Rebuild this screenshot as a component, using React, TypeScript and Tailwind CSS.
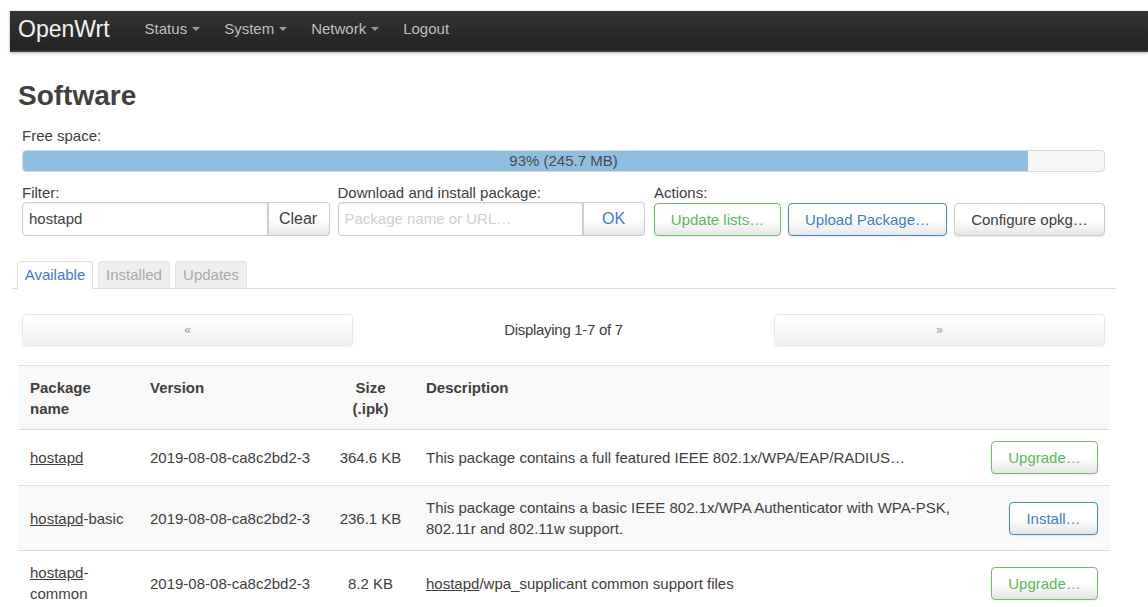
import React from "react";

const FONT = { fontFamily: '"Liberation Sans", Arial, Helvetica, sans-serif' };

const btnBase =
  "h-[33px] rounded-[4px] border bg-gradient-to-b from-white via-white to-[#e6e6e6] shadow-[inset_0_1px_0_rgba(255,255,255,0.2),0_1px_2px_rgba(0,0,0,0.08)] text-[15px] leading-none";

function Caret() {
  return (
    <span className="ml-[5px] inline-block h-0 w-0 border-x-[4px] border-t-[4px] border-x-transparent border-t-[#9a9a9a] align-middle" />
  );
}

function NavItem({ label, menu }: { label: string; menu?: boolean }) {
  return (
    <li className="flex items-center px-[12px] text-[15px] text-[#bfbfbf]">
      {label}
      {menu && <Caret />}
    </li>
  );
}

function Link({ children }: { children: React.ReactNode }) {
  return <span className="underline decoration-[#404040] underline-offset-[1px]">{children}</span>;
}

type Row = {
  name: React.ReactNode;
  version: string;
  size: string;
  desc: React.ReactNode;
  action: "upgrade" | "install";
  shaded?: boolean;
};

const rows: Row[] = [
  {
    name: <Link>hostapd</Link>,
    version: "2019-08-08-ca8c2bd2-3",
    size: "364.6 KB",
    desc: "This package contains a full featured IEEE 802.1x/WPA/EAP/RADIUS…",
    action: "upgrade",
  },
  {
    name: (
      <>
        <Link>hostapd</Link>-basic
      </>
    ),
    version: "2019-08-08-ca8c2bd2-3",
    size: "236.1 KB",
    desc: "This package contains a basic IEEE 802.1x/WPA Authenticator with WPA-PSK, 802.11r and 802.11w support.",
    action: "install",
    shaded: true,
  },
  {
    name: (
      <>
        <Link>hostapd</Link>-common
      </>
    ),
    version: "2019-08-08-ca8c2bd2-3",
    size: "8.2 KB",
    desc: (
      <>
        <Link>hostapd</Link>/wpa_supplicant common support files
      </>
    ),
    action: "upgrade",
  },
];

export default function App() {
  return (
    <div className="min-h-screen bg-white pl-[10px] pt-[11px] text-[#404040]" style={FONT}>
      {/* top navigation bar */}
      <nav className="flex h-[41px] items-center bg-gradient-to-b from-[#333333] to-[#222222] pb-[5px] shadow-[0_1px_3px_rgba(0,0,0,0.3),inset_0_-2px_0_rgba(255,255,255,0.12)]">
        <span className="pl-[8px] pr-[23px] text-[23px] leading-none text-[#f2f2f2]">OpenWrt</span>
        <ul className="flex">
          <NavItem label="Status" menu />
          <NavItem label="System" menu />
          <NavItem label="Network" menu />
          <NavItem label="Logout" />
        </ul>
      </nav>

      <h2 className="mt-[28px] pl-[8px] text-[28px] font-bold leading-[32px] text-[#404040]">Software</h2>

      {/* storage usage */}
      <div className="ml-[12px] mt-[13px] w-[1083px]">
        <div className="text-[15px] leading-[21px]">Free space:</div>
        <div className="relative mt-[4px] h-[22px] overflow-hidden rounded-[4px] border border-[#d9d9d9] bg-[#f7f7f7]">
          <div className="h-full w-[93%] bg-[#8fbfe0]" />
          <div className="absolute inset-0 flex items-center justify-center text-[15px] text-[#4a4a4a]">
            93% (245.7 MB)
          </div>
        </div>
      </div>

      {/* filter / install / actions */}
      <div className="ml-[12px] mt-[11px] flex w-[1083px] gap-[8px]">
        <div className="w-[308px]">
          <div className="text-[15px] leading-[19px]">Filter:</div>
          <div className="flex h-[34px]">
            <div className="flex flex-1 items-center rounded-l-[4px] border border-[#cccccc] pl-[6px] text-[15px] shadow-[inset_0_1px_2px_rgba(0,0,0,0.08)]">
              hostapd
            </div>
            <button className="w-[62px] rounded-r-[4px] border border-l-0 border-[#cccccc] bg-gradient-to-b from-white via-white to-[#e6e6e6] text-[16px] text-[#404040] shadow-[inset_1px_0_0_#cfcfcf]">
              Clear
            </button>
          </div>
        </div>
        <div className="w-[308px]">
          <div className="text-[15px] leading-[19px]">Download and install package:</div>
          <div className="flex h-[34px]">
            <div className="flex flex-1 items-center rounded-l-[4px] border border-[#cccccc] pl-[6px] text-[15px] text-[#d0d0d0] shadow-[inset_0_1px_2px_rgba(0,0,0,0.08)]">
              Package name or URL…
            </div>
            <button className="w-[62px] rounded-r-[4px] border border-l-0 border-[#cccccc] bg-gradient-to-b from-white via-white to-[#e6e6e6] text-[16px] text-[#3b7dd8] shadow-[inset_1px_0_0_#cfcfcf]">
              OK
            </button>
          </div>
        </div>
        <div className="ml-[1px] flex-1">
          <div className="text-[15px] leading-[19px]">Actions:</div>
          <div className="flex gap-[7px] pt-[1px]">
            <button className={`${btnBase} w-[127px] border-[#6cc06c] text-[#5cb85c]`}>Update lists…</button>
            <button className={`${btnBase} w-[159px] border-[#3f86d8] text-[#3b7dd8]`}>Upload Package…</button>
            <button className={`${btnBase} w-[151px] border-[#cccccc] text-[#404040]`}>Configure opkg…</button>
          </div>
        </div>
      </div>

      {/* tabs */}
      <div className="ml-[2px] mt-[25px] flex w-[1104px] gap-[5px] border-b border-[#dddddd] pl-[5px]">
        <div className="-mb-px flex h-[28px] w-[76px] items-center justify-center rounded-t-[4px] border border-b-white border-[#dddddd] bg-white text-[15px] text-[#3b7dd8]">
          Available
        </div>
        <div className="flex h-[27px] w-[72px] items-center justify-center rounded-t-[4px] border border-b-0 border-[#e2e2e2] bg-[#eeeeee] text-[15px] text-[#aaaaaa]">
          Installed
        </div>
        <div className="flex h-[27px] w-[72px] items-center justify-center rounded-t-[4px] border border-b-0 border-[#e2e2e2] bg-[#eeeeee] text-[15px] text-[#aaaaaa]">
          Updates
        </div>
      </div>

      {/* pager */}
      <div className="ml-[12px] mt-[25px] flex w-[1083px] items-center">
        <button className="h-[32px] w-[331px] rounded-[4px] border border-[#e8e8e8] bg-gradient-to-b from-white to-[#f0f0f0] text-[12px] text-[#999999] shadow-[0_1px_2px_rgba(0,0,0,0.05)]">
          «
        </button>
        <div className="flex-1 text-center text-[15px] tracking-[-0.3px]">Displaying 1-7 of 7</div>
        <button className="h-[32px] w-[331px] rounded-[4px] border border-[#e8e8e8] bg-gradient-to-b from-white to-[#f0f0f0] text-[12px] text-[#999999] shadow-[0_1px_2px_rgba(0,0,0,0.05)]">
          »
        </button>
      </div>

      {/* package list */}
      <table className="ml-[8px] mt-[19px] w-[1092px] table-fixed border-collapse text-[15px] leading-[21px]">
        <colgroup>
          <col className="w-[120px]" />
          <col className="w-[189px]" />
          <col className="w-[87px]" />
          <col />
          <col className="w-[131px]" />
        </colgroup>
        <thead>
          <tr className="border-t border-[#dddddd] bg-[#f9f9f9] align-top font-bold">
            <th className="px-[12px] pb-[10px] pt-[11px] text-left">Package name</th>
            <th className="px-[12px] pb-[10px] pt-[11px] text-left">Version</th>
            <th className="px-[12px] pb-[10px] pt-[11px] text-center">Size (.ipk)</th>
            <th className="px-[12px] pb-[10px] pt-[11px] text-left">Description</th>
            <th className="px-[12px] pb-[10px] pt-[11px]" />
          </tr>
        </thead>
        <tbody>
          {rows.map((r, i) => (
            <tr key={i} className={`border-t border-[#dddddd] align-middle ${r.shaded ? "bg-[#f9f9f9]" : "bg-white"}`}>
              <td className="px-[12px] py-[11px]">{r.name}</td>
              <td className="px-[12px] py-[11px]">{r.version}</td>
              <td className="px-[12px] py-[11px] text-center">{r.size}</td>
              <td className="px-[12px] py-[11px]">{r.desc}</td>
              <td className="px-[12px] py-[11px]">
                <div className="flex justify-end">
                  {r.action === "upgrade" ? (
                    <button className={`${btnBase} h-[32px] w-[107px] border-[#6cc06c] text-[#5cb85c]`}>Upgrade…</button>
                  ) : (
                    <button className={`${btnBase} h-[32px] w-[89px] border-[#3f86d8] text-[#3b7dd8]`}>Install…</button>
                  )}
                </div>
              </td>
            </tr>
          ))}
        </tbody>
      </table>
    </div>
  );
}
